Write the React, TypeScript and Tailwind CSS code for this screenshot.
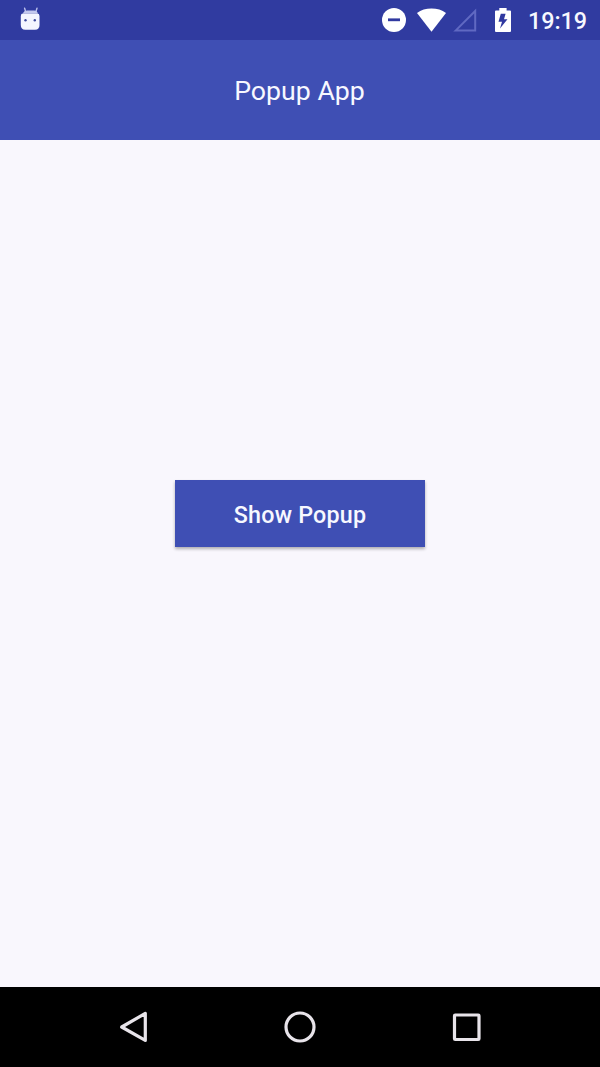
import React from 'react';

function AndroidIcon() {
  return (
    <svg className="block h-6 w-5" viewBox="0 0 20 24" fill="none">
      <path d="M4.6 1.2 5.8 5M17 1.2 15.8 5" stroke="#bcc1ec" strokeWidth="1.4" strokeLinecap="round" />
      <path d="M2.6 6.5Q4 3.6 7 3.6H14Q17 3.6 18 6.5Z" fill="#c3c8ee" />
      <path d="M.8 9Q.8 6.6 3.2 6.6H17.1Q19.5 6.6 19.5 9V18Q19.5 22.7 15 22.7H5.3Q.8 22.7 .8 18Z" fill="#f4f5ff" />
      <circle cx="5.5" cy="13.3" r="1.2" fill="#3e4a9d" />
      <circle cx="14.8" cy="13.3" r="1.2" fill="#3e4a9d" />
    </svg>
  );
}

function DoNotDisturbIcon() {
  return (
    <svg className="block h-6 w-6" viewBox="0 0 24 24">
      <circle cx="12" cy="12" r="12" fill="#ffffff" />
      <path d="M6 10.4H18V13.2H6Z" fill="#3039a0" />
    </svg>
  );
}

function WifiIcon() {
  return (
    <svg className="ml-[11px] block h-6 w-[29px]" viewBox="0 0 29 24">
      <path d="M0 4.9C4 1.8 9 .4 14.5 .4S25 1.8 29 4.9L14.5 23.8Z" fill="#ffffff" />
    </svg>
  );
}

function SignalIcon() {
  return (
    <svg className="ml-[7px] block h-6 w-6" viewBox="0 0 24 24" fill="none">
      <path d="M2.6 22.6 22.2 3V22.6Z" stroke="#6069c2" strokeWidth="2" />
    </svg>
  );
}

function BatteryIcon() {
  return (
    <svg className="ml-[17px] block h-[25px] w-[18px]" viewBox="0 0 18 25">
      <path d="M5.3 0H12.6V2.4H16Q17 2.4 17 3.4V23Q17 24 16 24H2Q1 24 1 23V3.4Q1 2.4 2 2.4H5.3Z" fill="#ffffff" />
      <path d="M11.6 5.8H6.8L4.5 13.7H8L6 20.5 13.5 11.2H10Z" fill="#3039a0" />
    </svg>
  );
}

function StatusBar() {
  return (
    <div className="flex h-10 items-center bg-[#303ba0] pl-5 pr-[13px]">
      <div className="-mt-[3px]">
        <AndroidIcon />
      </div>
      <div className="ml-auto flex items-center">
        <DoNotDisturbIcon />
        <WifiIcon />
        <SignalIcon />
        <BatteryIcon />
        <span className="ml-[16px] mt-[2px] w-[59px] whitespace-nowrap text-[23.3px] font-medium leading-6 text-[#f7f8ff]">
          19:19
        </span>
      </div>
    </div>
  );
}

function NavigationBar() {
  return (
    <nav className="flex h-20 items-center justify-between bg-black px-[117px]">
      <button aria-label="Back" className="block">
        <svg className="block h-8 w-8" viewBox="0 0 32 32" fill="none" stroke="#e8e4ea" strokeWidth="3.2" strokeLinejoin="round">
          <path d="M4.7 16 28.3 2.4V29.4Z" />
        </svg>
      </button>
      <button aria-label="Home" className="block">
        <svg className="block h-8 w-8" viewBox="0 0 32 32" fill="none" stroke="#e8e4ea" strokeWidth="3.2">
          <circle cx="16" cy="16" r="14" />
        </svg>
      </button>
      <button aria-label="Recents" className="block">
        <svg className="block h-8 w-8" viewBox="0 0 32 32" fill="none" stroke="#e8e4ea" strokeWidth="3.2">
          <rect x="3.5" y="4" width="24.5" height="24.5" rx=".7" />
        </svg>
      </button>
    </nav>
  );
}

export default function App() {
  return (
    <div className="flex h-[1067px] w-[600px] flex-col overflow-hidden bg-[#f9f7fd] font-['Roboto',sans-serif]">
      <StatusBar />
      <header className="flex h-[100px] items-center justify-center bg-[#3f4fb4] pr-px pt-[2px]">
        <h1 className="text-[26.7px] font-normal leading-8 text-[#f7f8ff]">Popup App</h1>
      </header>
      <main className="flex flex-1 items-start justify-center pt-[340px]">
        <button className="flex h-[67px] w-[250px] items-center justify-center bg-[#3f4fb4] pt-[3px] text-[23.3px] font-medium tracking-[0.2px] text-[#f7f8ff] shadow-[0_2px_3px_rgba(0,0,0,0.3)]">
          Show Popup
        </button>
      </main>
      <NavigationBar />
    </div>
  );
}
